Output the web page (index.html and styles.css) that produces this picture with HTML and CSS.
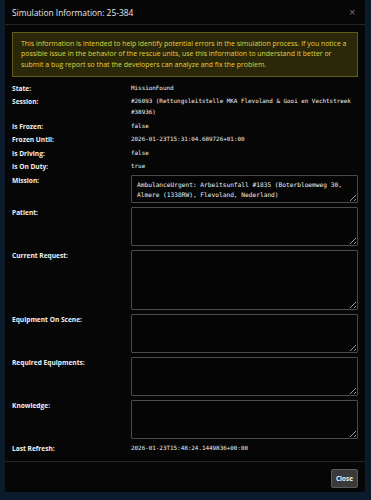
FILE: index.html
```html
<!DOCTYPE html>
<html lang="en">
<head>
    <meta charset="UTF-8">
    <meta name="viewport" content="width=device-width, initial-scale=1.0">
    <title>Simulation Information</title>
    <link rel="stylesheet" href="styles.css">
</head>
<body>
    <div class="modal">
        <div class="modal-header">
            <h5 class="modal-title">Simulation Information: 25-384</h5>
            <button class="btn-x">&times;</button>
        </div>
        <div class="modal-body">
            <div class="alert">
                This information is intended to help identify potential errors in the simulation process. If you notice a possible issue in the behavior of the rescue units, use this information to understand it better or submit a bug report so that the developers can analyze and fix the problem.
            </div>
            <div class="info">
                <div class="row"><span class="label">State:</span><span class="value">MissionFound</span></div>
                <div class="row"><span class="label">Session:</span><span class="value">#26093 (Rettungsleitstelle MKA Flevoland &amp; Gooi en Vechtstreek #38936)</span></div>
                <div class="row"><span class="label">Is Frozen:</span><span class="value">false</span></div>
                <div class="row"><span class="label">Frozen Until:</span><span class="value">2026-01-23T15:31:04.689726+01:00</span></div>
                <div class="row"><span class="label">Is Driving:</span><span class="value">false</span></div>
                <div class="row"><span class="label">Is On Duty:</span><span class="value">true</span></div>
                <div class="row area"><span class="label">Mission:</span><textarea class="box h-28" readonly>AmbulanceUrgent: Arbeitsunfall #1835 (Boterbloemweg 30, Almere (1338RW), Flevoland, Nederland)</textarea></div>
                <div class="row area"><span class="label">Patient:</span><textarea class="box h-39" readonly></textarea></div>
                <div class="row area"><span class="label">Current Request:</span><textarea class="box h-60" readonly></textarea></div>
                <div class="row area"><span class="label">Equipment On Scene:</span><textarea class="box h-39" readonly></textarea></div>
                <div class="row area"><span class="label">Required Equipments:</span><textarea class="box h-39" readonly></textarea></div>
                <div class="row area"><span class="label">Knowledge:</span><textarea class="box h-39" readonly></textarea></div>
                <div class="row"><span class="label">Last Refresh:</span><span class="value">2026-01-23T15:48:24.1449836+00:00</span></div>
            </div>
        </div>
        <div class="modal-footer">
            <button class="btn-close">Close</button>
        </div>
    </div>
</body>
</html>
```

FILE: styles.css
```css
:root {
    --fondo: #0c1b2b;
    --modal: #060607;
    --linea: #262626;
    --amarillo: #e0d240;
    --texto: #e6e6e6;
}

body {
    margin: 0;
    background-color: var(--fondo);
    font-family: "Open Sans", Arial, sans-serif;
    color: var(--texto);
}

.modal {
    width: 360px;
    height: 492px;
    margin-left: 5px;
    background-color: var(--modal);
    display: flex;
    flex-direction: column;
}

.modal-header {
    height: 25px;
    padding: 0 7px;
    display: flex;
    align-items: center;
    justify-content: space-between;
    border-bottom: 1px solid var(--linea);
}

.modal-title {
    margin: 0;
    font-size: 8.4px;
    font-weight: 400;
    color: #e8e8e8;
}

.btn-x {
    background: none;
    border: none;
    padding: 0;
    margin-right: 2px;
    font-size: 9px;
    color: #777;
    font-family: "DejaVu Sans", sans-serif;
}

.modal-body {
    padding: 7px 7px 5px;
    flex: 1;
}

.alert {
    border: 1px solid #5f5c1c;
    background-color: #2a2808;
    color: var(--amarillo);
    font-size: 6.95px;
    line-height: 10.5px;
    padding: 5.5px 8px 6px;
    margin-bottom: 5.5px;
}

.row {
    display: grid;
    grid-template-columns: 119px 1fr;
    line-height: 11px;
    margin-bottom: 2.5px;
}

.row.area {
    margin-bottom: 4px;
}

.label {
    font-size: 6.6px;
    font-weight: 700;
    color: #f0f0f0;
}

.value {
    font-family: "DejaVu Sans Mono", monospace;
    font-size: 5.9px;
    color: #f0f0f0;
}

.box {
    display: block;
    width: 100%;
    box-sizing: border-box;
    background-color: #050505;
    border: 1px solid #4a4a4a;
    border-radius: 1px;
    color: #f0f0f0;
    font-family: "DejaVu Sans Mono", monospace;
    font-size: 6.2px;
    line-height: 10px;
    padding: 4px 5px;
    margin: 0;
    overflow: hidden;
}

.h-28 { height: 28px; }
.h-39 { height: 39px; }
.h-60 { height: 60px; }

.modal-footer {
    border-top: 1px solid var(--linea);
    padding: 7px;
    display: flex;
    justify-content: flex-end;
    align-items: flex-start;
    height: 31px;
    box-sizing: border-box;
}

.btn-close {
    width: 27px;
    height: 19px;
    padding: 0;
    background-color: #3a3a3a;
    border: 1px solid #5a5a5a;
    border-radius: 2px;
    color: #f2f2f2;
    font-family: "Open Sans", Arial, sans-serif;
    font-size: 6.4px;
    font-weight: 700;
}
```
